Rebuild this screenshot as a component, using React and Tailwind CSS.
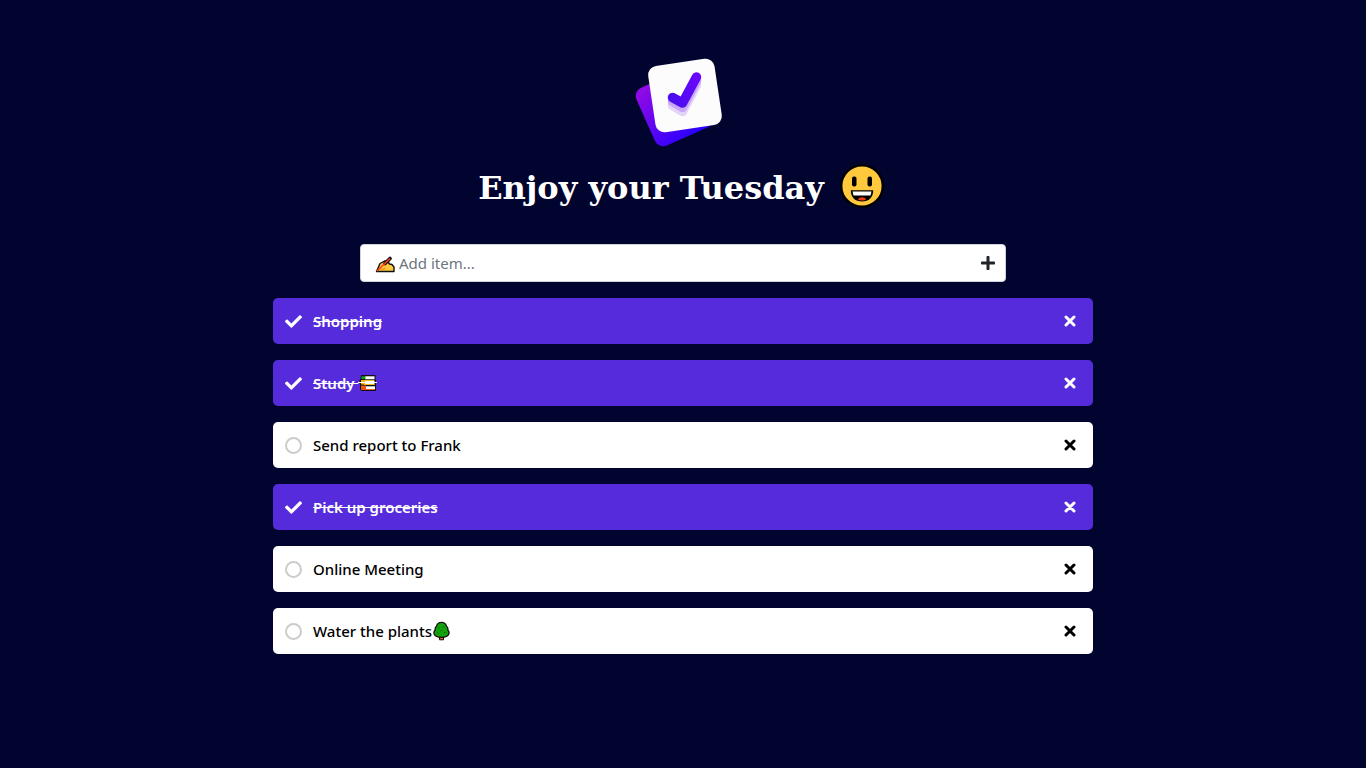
import { useState } from "react";
import { FaCheck, FaPlus } from "react-icons/fa";

function Logo() {
  return (
    <svg viewBox="0 0 92 92" className="h-[92px] w-[92px]" role="img" aria-label="Todo logo">
      <defs>
        <linearGradient id="card" x1="0.3" y1="0" x2="0.7" y2="1">
          <stop offset="0" stopColor="#8e0ae6" />
          <stop offset="1" stopColor="#2a00ff" />
        </linearGradient>
        <linearGradient id="tick" gradientUnits="userSpaceOnUse" x1="36" y1="42" x2="68" y2="20">
          <stop offset="0" stopColor="#4a0cf0" />
          <stop offset="1" stopColor="#6c05fc" />
        </linearGradient>
      </defs>
      <rect x="10" y="20" width="63" height="63" rx="9" fill="url(#card)" transform="rotate(-24 41.5 51.5)" />
      <rect x="18.5" y="6" width="67" height="67" rx="9" fill="#fcfcfd" transform="rotate(-8.5 52 39.5)" />
      <g fill="none" strokeWidth="9.5" strokeLinecap="round" strokeLinejoin="round">
        <path d="M39.500 49.500l10 6 14-26.500" stroke="#e4d3fb" />
        <path d="M39.500 45.500l10 6 14-26.500" stroke="#c7a6f6" />
        <path d="M39.500 41.500l10 5.500 14-26" stroke="url(#tick)" />
      </g>
    </svg>
  );
}

function Smile() {
  return (
    <svg viewBox="0 0 44 44" className="h-[44px] w-[44px]" role="img" aria-label="Smiling face">
      <circle cx="22" cy="22" r="20.800" fill="#ffc83d" stroke="#000" strokeWidth="2.400" />
      <rect x="12" y="12.500" width="4.500" height="10" rx="2" fill="#000" />
      <rect x="27.500" y="12.500" width="4.500" height="10" rx="2" fill="#000" />
      <path d="M10.800 26.300h22.400c0 7.500-4.700 11.200-11.200 11.200s-11.200-3.700-11.200-11.200z" fill="#000" />
      <path d="M12.500 27.500h19l-1 4h-17z" fill="#fff" />
      <path d="M18 35.500c1-3 7-3 8 0-2 1.300-6 1.300-8 0z" fill="#f03a17" />
    </svg>
  );
}

function WritingHand() {
  return (
    <svg viewBox="0 0 20 18" className="mt-1 h-[18px] w-[20px] shrink-0" aria-hidden="true">
      <path d="M1.500 15.500L5 7.500l4.500-2.500h3L14.500 8l2.500.5 2 2.500v4.500z" fill="#ffc83d" stroke="#111" strokeWidth="1.400" strokeLinejoin="round" />
      <path d="M10 7.500L15 2.500" stroke="#111" strokeWidth="3.600" strokeLinecap="round" />
      <path d="M2 15L15 2.500" stroke="#f4401c" strokeWidth="1.700" />
      <path d="M5.500 13.200h3.500l1-1.800" fill="none" stroke="#f7951d" strokeWidth="1.400" />
    </svg>
  );
}

function Books() {
  return (
    <svg viewBox="-1 0 19 18" className="h-[18px] w-[19px]" role="img" aria-label="Books">
      <path d="M2 1h14.500v4.500l.5 1v10.500H2.500L1 15.500V11L.5 8V6L1.500 5z" fill="#111" />
      <path d="M6 2.300h9.500v3H6z" fill="#fff" />
      <path d="M2.500 2.300h4v2.700h-4z" fill="#16a015" />
      <path d="M5 6.500h10.500V11H5z" fill="#fff" />
      <path d="M2 6h4v4.500H2zM5 6h10v1H5zM5 10h10.500v1H5z" fill="#f2b61c" />
      <path d="M6 12.300h10v2.700H6z" fill="#fff" />
      <path d="M2 11.500h5v4.500H2zM5 15h11v1H5z" fill="#f0521b" />
      <path d="M-1 8.500h19" stroke="#fff" strokeWidth="1" />
    </svg>
  );
}

function Tree() {
  return (
    <svg viewBox="-1 0 18 20" className="h-[20px] w-[18px]" role="img" aria-label="Tree">
      <path d="M6.500 15h4v3.800h-4z" fill="#e8541b" stroke="#111" strokeWidth="1" />
      <path d="M8.500 1.300c2.700 0 4.500 1.500 5 4 1.400 1 1.600 2.500 1.300 3.700 1.300 1.300 1.500 3 .9 4.300-.9 2.300-3.200 3-7.200 3s-6.300-.7-7.200-3c-.6-1.300-.4-3 .9-4.300-.3-1.200-.1-2.700 1.300-3.700.5-2.500 2.300-4 5-4z" fill="#13a10e" stroke="#111" strokeWidth="1.300" />
      <path d="M5 7h1.500M9.500 6H11M7.500 9.500H9M4 12h1.500M11 11.500h1.500" stroke="#0b6b0b" strokeWidth="1" />
    </svg>
  );
}

function Cross() {
  return (
    <svg viewBox="0 0 12 12" className="h-3 w-3" aria-hidden="true">
      <path d="M2 2l8 8M10 2L2 10" stroke="currentColor" strokeWidth="3" strokeLinecap="round" />
    </svg>
  );
}

const initialItems = [
  { id: 1, text: "Shopping", done: true },
  { id: 2, text: "Study", done: true, icon: <Books />, spaced: true },
  { id: 3, text: "Send report to Frank", done: false },
  { id: 4, text: "Pick up groceries", done: true },
  { id: 5, text: "Online Meeting", done: false },
  { id: 6, text: "Water the plants", done: false, icon: <Tree /> },
];

function Item({ item, onToggle, onRemove }) {
  return (
    <li
      className={`flex h-[46px] items-center rounded-[5px] px-3 ${
        item.done ? "bg-[#552bdb] text-white" : "bg-white text-black"
      }`}
    >
      <label className="flex flex-1 cursor-pointer items-center gap-[11px]">
        <input
          type="checkbox"
          checked={item.done}
          onChange={() => onToggle(item.id)}
          className="sr-only"
        />
        {item.done ? (
          <FaCheck className="h-[17px] w-[17px]" aria-hidden="true" />
        ) : (
          <span className="h-[17px] w-[17px] rounded-full border-2 border-[#cccccc]" />
        )}
        <span className="flex items-center">
          <span className={item.done ? "font-semibold whitespace-pre line-through" : "font-medium"}>
            {item.spaced ? item.text + " " : item.text}
          </span>
          {item.icon}
        </span>
      </label>
      <button type="button" aria-label={`Remove ${item.text}`} onClick={() => onRemove(item.id)} className="px-[5px]">
        <Cross />
      </button>
    </li>
  );
}

export default function App() {
  const [items, setItems] = useState(initialItems);
  const [draft, setDraft] = useState("");

  const toggle = (id) => setItems(items.map((i) => (i.id === id ? { ...i, done: !i.done } : i)));
  const remove = (id) => setItems(items.filter((i) => i.id !== id));
  const add = (event) => {
    event.preventDefault();
    if (!draft.trim()) return;
    setItems([...items, { id: Date.now(), text: draft.trim(), done: false }]);
    setDraft("");
  };

  return (
    <main className="flex min-h-screen flex-col items-center bg-[#020430] px-4 pt-14 pb-8 font-['Noto_Sans','Open_Sans',sans-serif] text-[15px] leading-6">
      <div className="pr-2">
        <Logo />
      </div>
      <h1 className="mt-4 flex items-center gap-4 pr-1 font-['DejaVu_Serif',serif] text-[32px] font-bold text-white">
        <span className="pt-1 leading-10">Enjoy your Tuesday</span>
        <Smile />
      </h1>
      <form
        onSubmit={add}
        className="mt-9 flex h-[38px] w-full max-w-[646px] items-center rounded-[4px] border border-[#ced4da] bg-white pr-[7px] pl-3.5"
      >
        <WritingHand />
        <input
          aria-label="Add item"
          placeholder="Add item..."
          value={draft}
          onChange={(e) => setDraft(e.target.value)}
          className="min-w-0 flex-1 bg-transparent pl-1 text-[#212529] outline-none placeholder:text-[#6c757d]"
        />
        <button type="submit" aria-label="Add" className="p-0.5 text-[#212529]">
          <FaPlus className="h-4 w-4" />
        </button>
      </form>
      <ul className="mt-4 flex w-full max-w-[820px] flex-col gap-4">
        {items.map((item) => (
          <Item key={item.id} item={item} onToggle={toggle} onRemove={remove} />
        ))}
      </ul>
    </main>
  );
}
